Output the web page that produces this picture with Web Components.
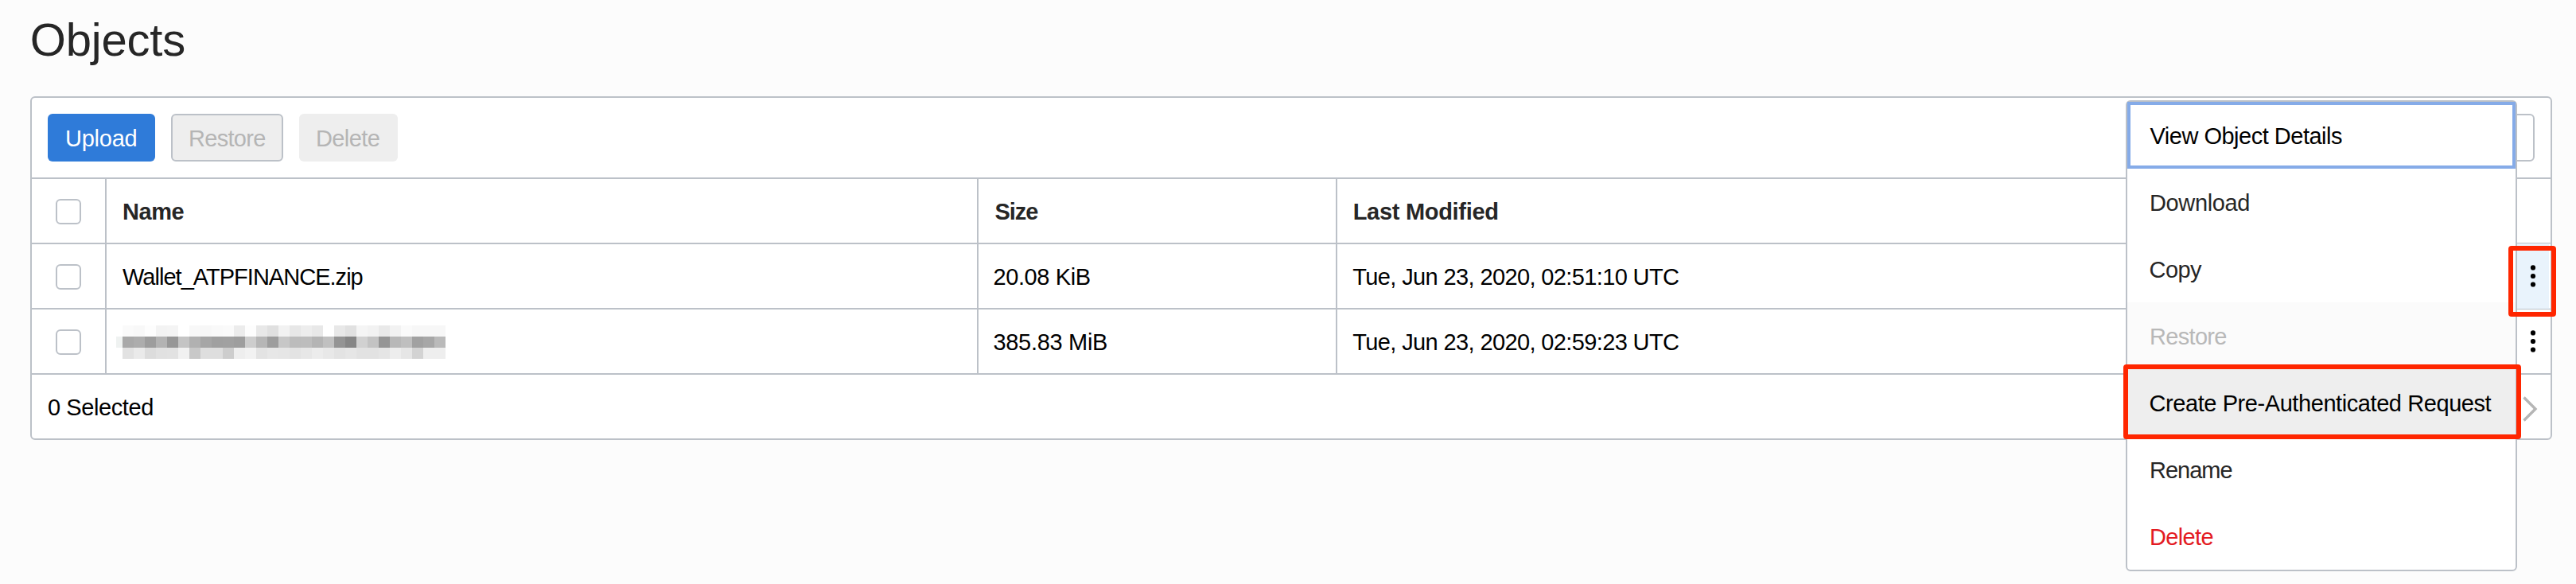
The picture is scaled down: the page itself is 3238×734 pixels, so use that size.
<!DOCTYPE html>
<html lang="en">
<head>
<meta charset="utf-8">
<title>Objects</title>
<style>
html,body{margin:0;height:100%;background:#fcfcfc;overflow:hidden}
body{font:29px "Liberation Sans",Arial,Helvetica,sans-serif;color:#000}
</style>
</head>
<body>
<object-browser></object-browser>
<script>
const define = (name, html, ready) => {
  const t = document.createElement('template');
  t.innerHTML = html;
  customElements.define(name, class extends HTMLElement {
    connectedCallback() {
      if (this.shadowRoot) return;
      this.attachShadow({ mode: 'open' }).append(t.content.cloneNode(true));
      if (ready) ready(this, this.shadowRoot);
    }
  });
};
const pen = document.createElement('canvas').getContext('2d');

/* Single-line text, tracked so that its ink spans `w` pixels. */
define('ui-label', `<style>
:host{display:block;white-space:pre;flex:none}
</style><slot></slot>`, el => {
  const s = getComputedStyle(el), text = el.textContent;
  pen.font = s.fontWeight + ' ' + s.fontSize + ' "Liberation Sans"';
  const m = pen.measureText(text);
  const ink = m.actualBoundingBoxRight + m.actualBoundingBoxLeft;
  el.style.letterSpacing = ((+el.getAttribute('w') - ink) / (text.length - 1)).toFixed(3) + 'px';
  el.style.marginLeft = (m.actualBoundingBoxLeft + (+el.getAttribute('dx') || 0)).toFixed(2) + 'px';
});

define('ui-button', `<style>
:host{display:flex;align-items:center;box-sizing:border-box;height:60px;border-radius:6px;padding:2px 0 0 23px;background:#eee;color:#b5b5b5;flex:none}
:host([kind=primary]){background:#2f7bd9;color:#fff}
:host([kind=outline]){border:2px solid #bcc1c8;padding:2px 0 0 22px}
</style><slot></slot>`);

define('ui-checkbox', `<style>
:host{display:block;box-sizing:border-box;width:32px;height:32px;border:2px solid #bcc1c8;border-radius:6px;background:#fff}
</style>`);

define('kebab-icon', `<style>:host{display:block}svg{display:block}</style>
<svg width="8" height="30" viewBox="0 0 8 30"><g fill="#000"><circle cx="4" cy="4.4" r="3.1"/><circle cx="4" cy="15" r="3.1"/><circle cx="4" cy="25.5" r="3.1"/></g></svg>`);

define('chevron-icon', `<style>:host{display:block}svg{display:block}</style>
<svg width="20" height="34" viewBox="0 0 20 34"><path d="M2.5 2.5 17 17 2.5 31.5" fill="none" stroke="#b5b5b5" stroke-width="3.4"/></svg>`);

/* Redacted name: three rows of mosaic tiles. */
define('pixel-mask', `<style>:host{display:block;flex:none}svg{display:block}</style>
<svg width="414" height="42" shape-rendering="crispEdges"></svg>`, (el, root) => {
  const rows = [
    'fa f8 fd f3 f4 ff f8 f7 f9 fa ec fd e8 e0 f2 e7 ed e8 ff e8 e1 f5 f2 e9 f2 fa f7 f7 f7',
    'a9 ad 9d b3 97 c4 b1 a6 a0 a1 9e cd b6 9d c7 bc bd b4 c0 94 86 d1 c3 95 b8 bf a1 a7 ba',
    'e2 ea dc e1 e2 f1 c8 de de cd ee f2 e3 e7 e6 e3 e7 ec e8 e3 e6 e2 e2 e5 ed e6 d3 ee ee'];
  let out = '<rect x="0" y="14" width="8" height="14" fill="#eff2f1"/>';
  rows.forEach((r, y) => r.split(' ').forEach((c, x) => {
    out += `<rect x="${8 + x * 14}" y="${y * 14}" width="14" height="14" fill="#${c + c + c}"/>`;
  }));
  root.querySelector('svg').innerHTML = out;
});

define('table-row', `<style>
:host{display:grid;grid-template-columns:94px 1096px 451px 1fr 42px;height:80px;border-bottom:2px solid #bcc1c8}
:host([head]){font-weight:bold;color:#262626}
div{box-sizing:border-box;display:flex;align-items:center;padding:2px 0 0 20px;border-right:2px solid #bcc1c8;min-width:0}
.check{padding:2px 0 0;justify-content:center}
.date{border:0}
.act{border:0;padding:0 0 0 16px}
:host([active]) .act{background:linear-gradient(#e9f3fc,#e9f3fc) 0 0/40px 100% no-repeat;box-shadow:0 -1px #e9f3fc,0 1px #e9f3fc}
</style>
<div class="check"><ui-checkbox></ui-checkbox></div>
<div><slot name="name"></slot></div>
<div><slot name="size"></slot></div>
<div class="date"><slot name="date"></slot></div>
<div class="act"><slot name="act"></slot></div>`);

define('object-panel', `<style>
:host{display:block;box-sizing:border-box;margin:0 30px 0 38px;height:432px;border:2px solid #bcc1c8;border-radius:6px;background:#fff}
.bar{display:flex;align-items:center;gap:20px;height:100px;padding:0 20px;border-bottom:2px solid #bcc1c8}
.search{margin-left:auto;box-sizing:border-box;width:420px;height:60px;border:2px solid #bcc1c8;border-radius:6px}
.foot{display:flex;align-items:center;height:80px;padding:2px 16px 0 21px;box-sizing:border-box}
chevron-icon{margin:4px 0 0 auto}
</style>
<div class="bar">
<ui-button kind="primary" style="width:135px"><ui-label w="87.5" dx="1">Upload</ui-label></ui-button>
<ui-button kind="outline" style="width:141px"><ui-label w="94.2">Restore</ui-label></ui-button>
<ui-button style="width:124px"><ui-label w="77.7">Delete</ui-label></ui-button>
<div class="search"></div>
</div>
<table-row head><ui-label slot="name" w="76.5" dx="1">Name</ui-label><ui-label slot="size" w="54.6" dx="0.6">Size</ui-label><ui-label slot="date" w="180.6" dx="0.7">Last Modified</ui-label></table-row>
<table-row active><ui-label slot="name" w="301.6">Wallet_ATPFINANCE.zip</ui-label><ui-label slot="size" w="120.3" dx="-0.6">20.08 KiB</ui-label><ui-label slot="date" w="409.7" dx="-0.7">Tue, Jun 23, 2020, 02:51:10 UTC</ui-label><kebab-icon slot="act"></kebab-icon></table-row>
<table-row><pixel-mask slot="name" style="margin:0 0 0 -8px"></pixel-mask><ui-label slot="size" w="141.7" dx="-0.6">385.83 MiB</ui-label><ui-label slot="date" w="409.7" dx="-0.7">Tue, Jun 23, 2020, 02:59:23 UTC</ui-label><kebab-icon slot="act"></kebab-icon></table-row>
<div class="foot"><ui-label w="131.2">0 Selected</ui-label><chevron-icon></chevron-icon></div>`);

define('menu-item', `<style>
:host{display:flex;align-items:center;box-sizing:border-box;height:84px;padding:2px 0 0 28.5px;color:#262626}
:host([focused]){border:4px solid #85abe8;padding:2px 0 0 24.5px;color:#000}
:host([disabled]){background:#fbfbfb;color:#b8b8b8}
:host([hot]){background:#eee;color:#000}
:host([danger]){color:#e31b23}
</style><slot></slot>`);

define('action-menu', `<style>
:host{display:block;box-sizing:border-box;width:492px;height:592px;border:2px solid #bcc1c8;border-radius:6px;background:#fff}
</style>
<menu-item focused><ui-label w="241.5">View Object Details</ui-label></menu-item>
<menu-item><ui-label w="123.3" dx="1.5">Download</ui-label></menu-item>
<menu-item><ui-label w="65.6">Copy</ui-label></menu-item>
<menu-item disabled><ui-label w="94.3" dx="1.5">Restore</ui-label></menu-item>
<menu-item hot><ui-label w="429.1">Create Pre-Authenticated Request</ui-label></menu-item>
<menu-item><ui-label w="101.5" dx="1.5">Rename</ui-label></menu-item>
<menu-item danger><ui-label w="77.5" dx="1.5">Delete</ui-label></menu-item>`);

define('call-out', `<style>
:host{display:block;box-sizing:border-box;border:6px solid #ff2600;border-radius:4px}
</style>`);

define('object-browser', `<style>
:host{display:block;position:relative;width:3238px;height:734px;background:#fcfcfc;overflow:hidden}
h1{margin:0;height:121px;padding-left:39.8px;font-size:58px;line-height:100px;font-weight:normal;color:#262626}
action-menu{position:absolute;left:2672px;top:126px}
call-out{position:absolute}
.a{left:3153px;top:309px;width:60px;height:89px}
.b{left:2669px;top:458px;width:500px;height:94px}
</style>
<h1><ui-label w="191.4">Objects</ui-label></h1>
<object-panel></object-panel>
<action-menu></action-menu>
<call-out class="a"></call-out>
<call-out class="b"></call-out>`);
</script>
</body>
</html>
